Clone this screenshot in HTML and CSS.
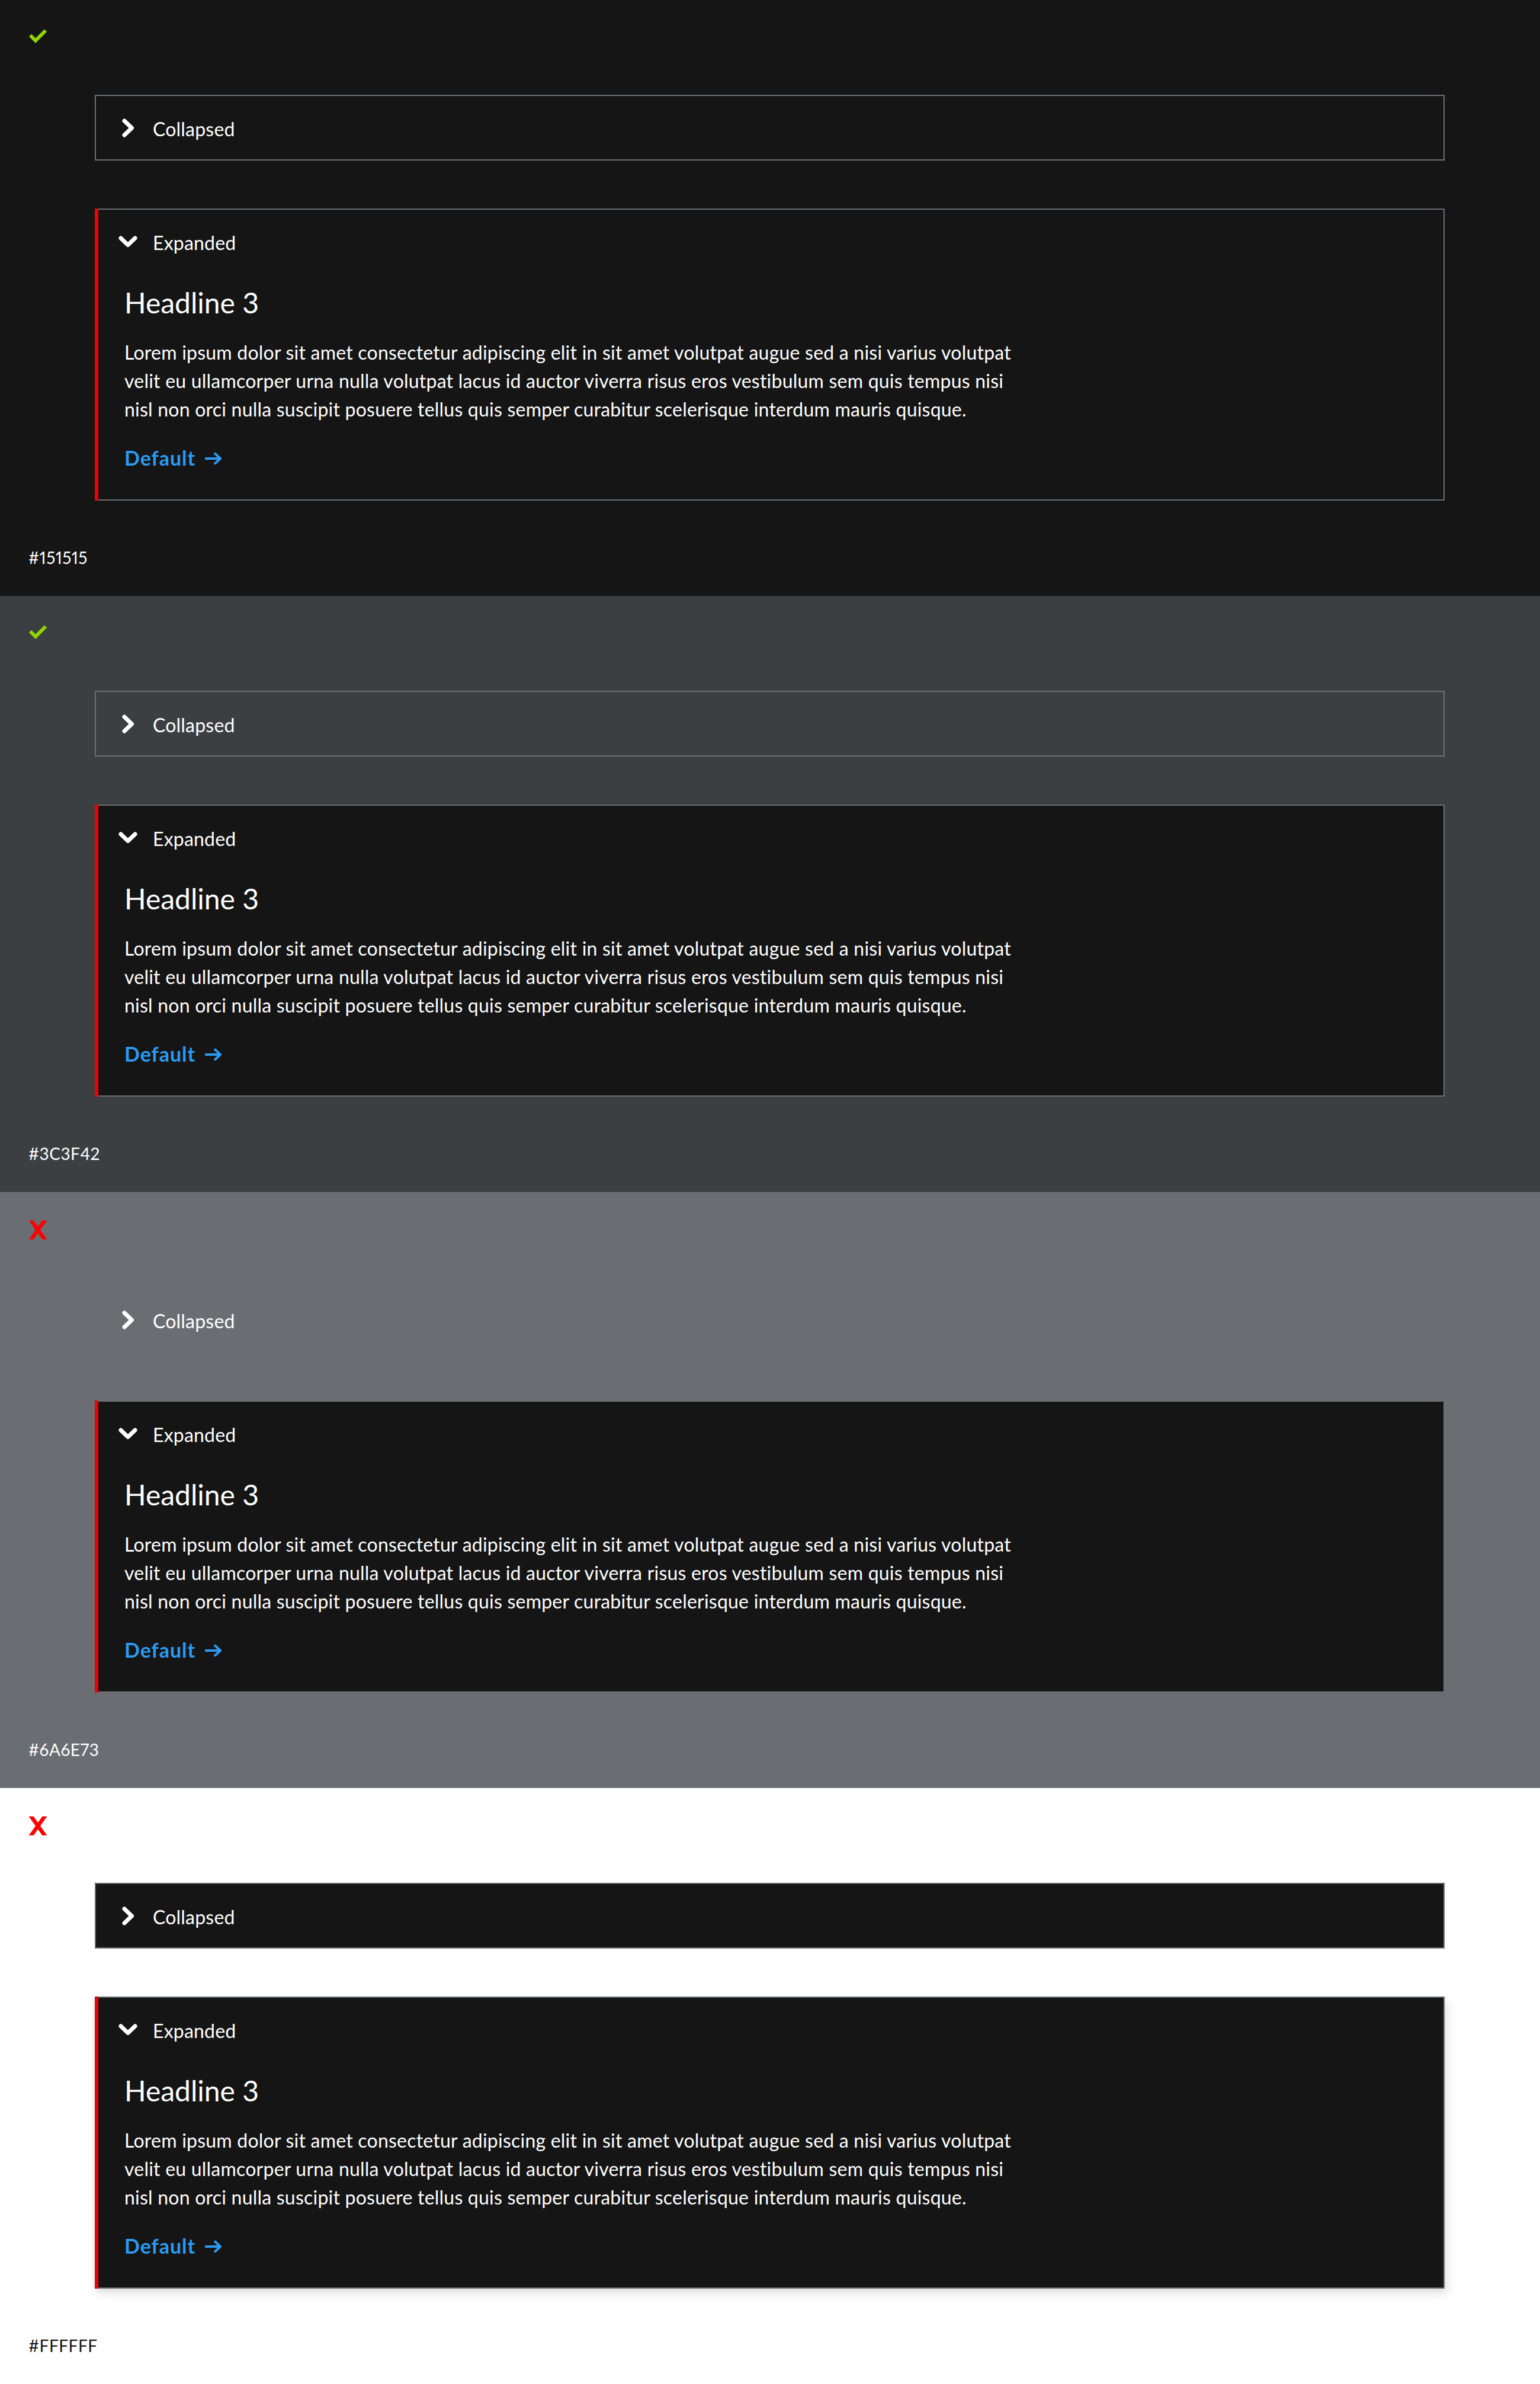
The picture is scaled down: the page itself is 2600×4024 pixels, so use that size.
FILE: index.html
```html
<!DOCTYPE html>
<html lang="en">
<head>
<meta charset="utf-8">
<title>Accordion on backgrounds</title>
<link rel="stylesheet" href="styles.css">
</head>
<body>

<section class="swatch swatch--151515">
  <div class="status">
    <svg class="status-icon" viewBox="0 0 32 32"><polyline class="check" points="3,11.5 12,20.5 29,3.5"/></svg>
  </div>
  <div class="accordion">
    <div class="acc-item">
      <div class="acc-toggle">
        <svg class="chev" viewBox="0 0 32 32"><polyline points="10,4 22.5,16 10,28"/></svg>
        <span>Collapsed</span>
      </div>
    </div>
    <div class="acc-item acc-item--expanded">
      <div class="acc-toggle">
        <svg class="chev" viewBox="0 0 32 32"><polyline points="4,10 16,21.5 28,10"/></svg>
        <span>Expanded</span>
      </div>
      <div class="acc-body">
        <h3 class="acc-title">Headline 3</h3>
        <p class="acc-text">Lorem ipsum dolor sit amet consectetur adipiscing elit in sit amet volutpat augue sed a nisi varius volutpat<br>velit eu ullamcorper urna nulla volutpat lacus id auctor viverra risus eros vestibulum sem quis tempus nisi<br>nisl non orci nulla suscipit posuere tellus quis semper curabitur scelerisque interdum mauris quisque.</p>
        <a class="acc-link" href="#"><span>Default</span><svg class="arrow" viewBox="0 0 28 20"><line x1="1" y1="10" x2="26" y2="10"/><polyline points="17,1.5 26,10 17,18.5"/></svg></a>
      </div>
    </div>
  </div>
  <div class="swatch-label">#151515</div>
</section>

<section class="swatch swatch--3c3f42">
  <div class="status">
    <svg class="status-icon" viewBox="0 0 32 32"><polyline class="check" points="3,11.5 12,20.5 29,3.5"/></svg>
  </div>
  <div class="accordion">
    <div class="acc-item">
      <div class="acc-toggle">
        <svg class="chev" viewBox="0 0 32 32"><polyline points="10,4 22.5,16 10,28"/></svg>
        <span>Collapsed</span>
      </div>
    </div>
    <div class="acc-item acc-item--expanded">
      <div class="acc-toggle">
        <svg class="chev" viewBox="0 0 32 32"><polyline points="4,10 16,21.5 28,10"/></svg>
        <span>Expanded</span>
      </div>
      <div class="acc-body">
        <h3 class="acc-title">Headline 3</h3>
        <p class="acc-text">Lorem ipsum dolor sit amet consectetur adipiscing elit in sit amet volutpat augue sed a nisi varius volutpat<br>velit eu ullamcorper urna nulla volutpat lacus id auctor viverra risus eros vestibulum sem quis tempus nisi<br>nisl non orci nulla suscipit posuere tellus quis semper curabitur scelerisque interdum mauris quisque.</p>
        <a class="acc-link" href="#"><span>Default</span><svg class="arrow" viewBox="0 0 28 20"><line x1="1" y1="10" x2="26" y2="10"/><polyline points="17,1.5 26,10 17,18.5"/></svg></a>
      </div>
    </div>
  </div>
  <div class="swatch-label">#3C3F42</div>
</section>

<section class="swatch swatch--6a6e73">
  <div class="status">
    <svg class="status-icon" viewBox="0 0 32 32"><line class="cross" x1="2.5" y1="-3" x2="29.5" y2="35"/><line class="cross" x1="29.5" y1="-3" x2="2.5" y2="35"/></svg>
  </div>
  <div class="accordion">
    <div class="acc-item">
      <div class="acc-toggle">
        <svg class="chev" viewBox="0 0 32 32"><polyline points="10,4 22.5,16 10,28"/></svg>
        <span>Collapsed</span>
      </div>
    </div>
    <div class="acc-item acc-item--expanded">
      <div class="acc-toggle">
        <svg class="chev" viewBox="0 0 32 32"><polyline points="4,10 16,21.5 28,10"/></svg>
        <span>Expanded</span>
      </div>
      <div class="acc-body">
        <h3 class="acc-title">Headline 3</h3>
        <p class="acc-text">Lorem ipsum dolor sit amet consectetur adipiscing elit in sit amet volutpat augue sed a nisi varius volutpat<br>velit eu ullamcorper urna nulla volutpat lacus id auctor viverra risus eros vestibulum sem quis tempus nisi<br>nisl non orci nulla suscipit posuere tellus quis semper curabitur scelerisque interdum mauris quisque.</p>
        <a class="acc-link" href="#"><span>Default</span><svg class="arrow" viewBox="0 0 28 20"><line x1="1" y1="10" x2="26" y2="10"/><polyline points="17,1.5 26,10 17,18.5"/></svg></a>
      </div>
    </div>
  </div>
  <div class="swatch-label">#6A6E73</div>
</section>

<section class="swatch swatch--ffffff">
  <div class="status">
    <svg class="status-icon" viewBox="0 0 32 32"><line class="cross" x1="2.5" y1="-3" x2="29.5" y2="35"/><line class="cross" x1="29.5" y1="-3" x2="2.5" y2="35"/></svg>
  </div>
  <div class="accordion">
    <div class="acc-item">
      <div class="acc-toggle">
        <svg class="chev" viewBox="0 0 32 32"><polyline points="10,4 22.5,16 10,28"/></svg>
        <span>Collapsed</span>
      </div>
    </div>
    <div class="acc-item acc-item--expanded">
      <div class="acc-toggle">
        <svg class="chev" viewBox="0 0 32 32"><polyline points="4,10 16,21.5 28,10"/></svg>
        <span>Expanded</span>
      </div>
      <div class="acc-body">
        <h3 class="acc-title">Headline 3</h3>
        <p class="acc-text">Lorem ipsum dolor sit amet consectetur adipiscing elit in sit amet volutpat augue sed a nisi varius volutpat<br>velit eu ullamcorper urna nulla volutpat lacus id auctor viverra risus eros vestibulum sem quis tempus nisi<br>nisl non orci nulla suscipit posuere tellus quis semper curabitur scelerisque interdum mauris quisque.</p>
        <a class="acc-link" href="#"><span>Default</span><svg class="arrow" viewBox="0 0 28 20"><line x1="1" y1="10" x2="26" y2="10"/><polyline points="17,1.5 26,10 17,18.5"/></svg></a>
      </div>
    </div>
  </div>
  <div class="swatch-label">#FFFFFF</div>
</section>

</body>
</html>
```

FILE: styles.css
```css
* { box-sizing: border-box; }

html, body {
  margin: 0;
  padding: 0;
}

body {
  font-family: "Lato", "Open Sans", "Liberation Sans", sans-serif;
  color: #ffffff;
  width: 2600px;
}

.swatch {
  height: 1006px;
  padding: 48px 48px 0 48px;
  display: flex;
  flex-direction: column;
}

.swatch--151515 { background: #151515; }
.swatch--3c3f42 { background: #3c3f42; }
.swatch--6a6e73 { background: #6a6e73; }
.swatch--ffffff { background: #ffffff; }

.status {
  height: 32px;
  display: flex;
  align-items: flex-start;
}

.status-icon {
  width: 32px;
  height: 32px;
  display: block;
  overflow: hidden;
}

.check {
  fill: none;
  stroke: #92d400;
  stroke-width: 6;
  stroke-linecap: butt;
  stroke-linejoin: miter;
}

.cross {
  stroke: #ff0000;
  stroke-width: 6.5;
  stroke-linecap: butt;
}

.accordion {
  margin: 80px 113px 0 112px;
  display: flex;
  flex-direction: column;
  gap: 81px;
}

.acc-item {
  position: relative;
  border: 2px solid #6a6e73;
  background: transparent;
}

.swatch--ffffff .acc-item {
  background: #151515;
}

.acc-item--expanded {
  background: #151515;
}

.swatch--ffffff .acc-item--expanded {
  box-shadow: 4px 8px 16px rgba(3, 3, 3, 0.12), 0 2px 6px rgba(3, 3, 3, 0.06);
}

.acc-item--expanded::before {
  content: "";
  position: absolute;
  left: -2px;
  top: -2px;
  bottom: -2px;
  width: 6px;
  background: #ee0000;
}

.acc-toggle {
  display: flex;
  align-items: center;
  gap: 26px;
  padding: 32px 32px 27px 38px;
  font-size: 32px;
  line-height: 48px;
  letter-spacing: 0.2px;
  color: #ffffff;
}

.chev {
  width: 32px;
  height: 32px;
  flex: none;
  display: block;
  margin-top: -4px;
}

.chev polyline {
  fill: none;
  stroke: #ffffff;
  stroke-width: 7;
  stroke-linecap: round;
  stroke-linejoin: round;
}

.acc-body {
  padding: 19px 48px 46px 48px;
  display: flex;
  flex-direction: column;
  align-items: flex-start;
}

.acc-title {
  margin: 0;
  font-size: 48px;
  line-height: 62px;
  font-weight: 400;
  color: #ffffff;
}

.acc-text {
  margin: 29px 0 0 0;
  font-size: 32px;
  line-height: 48px;
  letter-spacing: 0.22px;
  color: #ffffff;
  white-space: nowrap;
}

.acc-link {
  margin-top: 34px;
  display: inline-flex;
  align-items: center;
  gap: 16px;
  font-size: 34px;
  line-height: 48px;
  font-weight: 700;
  letter-spacing: 1px;
  color: #2b9af3;
  text-decoration: none;
}

.arrow {
  width: 28px;
  height: 20px;
  display: block;
  margin-top: 2px;
}

.arrow line,
.arrow polyline {
  fill: none;
  stroke: #2b9af3;
  stroke-width: 4;
  stroke-linecap: round;
  stroke-linejoin: round;
}

.swatch-label {
  margin-top: 75px;
  font-size: 28px;
  line-height: 42px;
  letter-spacing: 0.5px;
  font-variant-numeric: proportional-nums;
  color: #ffffff;
}

.swatch--ffffff .swatch-label {
  color: #151515;
}
```
